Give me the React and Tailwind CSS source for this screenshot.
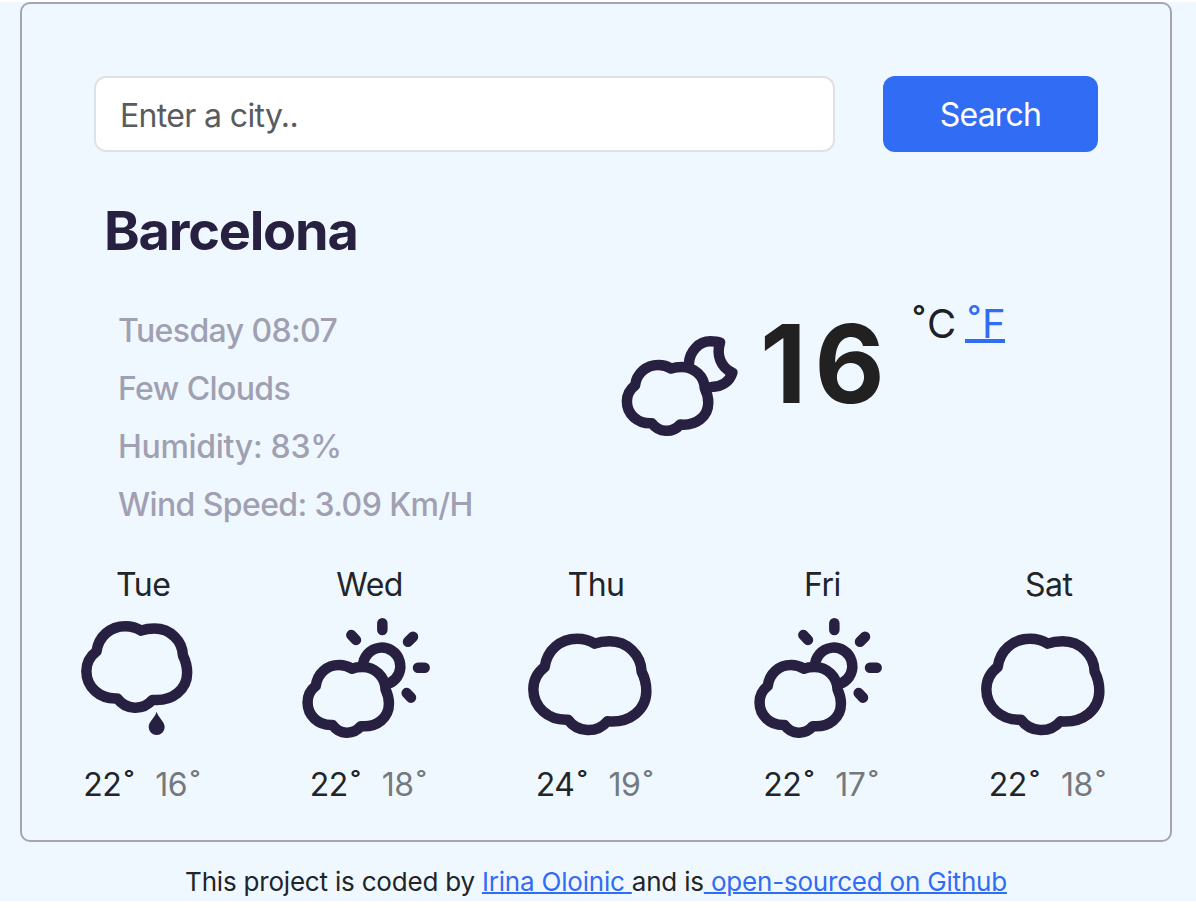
const CLOUD =
  "M135 321 C142 271 181 236 232 236 C252 236 270 241 285 251 C299 246 314 244 330 244 C383 244 424 285 426 335 C435 353 440 372 440 393 C440 448 392 490 323 484 A75 75 0 0 1 205 479 C145 482 101 440 101 388 C101 360 114 337 135 321 Z";

const stroke = {
  fill: "none",
  stroke: "#272041",
  strokeWidth: 10.5,
  strokeLinecap: "round",
  strokeLinejoin: "round",
  vectorEffect: "non-scaling-stroke",
};

function CloudIcon() {
  return (
    <svg viewBox="85 174 384 384" className="size-32">
      <path d={CLOUD} {...stroke} />
    </svg>
  );
}

function RainIcon() {
  return (
    <svg viewBox="17 174 384 384" className="size-32">
      <path d={CLOUD} transform="translate(-39 -12) scale(.892)" {...stroke} />
      <path d="M262 455 C266 472 286 484 286 501 A24 24 0 0 1 238 501 C238 484 258 472 262 455 Z" fill="#272041" />
    </svg>
  );
}

function SunCloudIcon() {
  return (
    <svg viewBox="696 174 384 384" className="size-32">
      <path d={CLOUD} transform="translate(640 140.4) scale(.72 .74)" {...stroke} />
      <path d="M879 318 A56 56 0 1 1 960 369" {...stroke} />
      <path d="M937 190 V210 M1014 245 L1029 230 M1044 323 H1064 M844 225 L858 240 M1010 399 L1023 413" {...stroke} />
    </svg>
  );
}

function MoonCloudIcon() {
  return (
    <svg viewBox="66 109 384 384" className="size-32">
      <path d={CLOUD} transform="translate(11 86) scale(.72)" {...stroke} />
      <path d="M270 250 C272 215 300 185 334 185 C347 185 356 186 363 189 C352 225 364 262 400 279 C392 305 370 322 337 322" {...stroke} />
    </svg>
  );
}

const days = [
  { day: "Tue", Icon: RainIcon, max: 22, min: 16 },
  { day: "Wed", Icon: SunCloudIcon, max: 22, min: 18 },
  { day: "Thu", Icon: CloudIcon, max: 24, min: 19 },
  { day: "Fri", Icon: SunCloudIcon, max: 22, min: 17 },
  { day: "Sat", Icon: CloudIcon, max: 22, min: 18 },
];

export default function App() {
  return (
    <div className="h-[908px] w-[1196px] overflow-hidden bg-white pt-0.5 font-['Inter',sans-serif] text-[#212529]">
      <div className="h-[899px] bg-[#f0f8ff] px-5 pr-6">
        <main className="h-[840px] rounded-[10px] border-2 border-[#a5a3b5] pt-[72px]">
          <form className="ml-[72px] flex gap-12">
            <input
              className="h-19 w-[741px] rounded-xl border-2 border-[#dee2e6] bg-white px-6 pt-0.5 text-[32px] tracking-[-0.65px] placeholder:text-[#595c5f]"
              placeholder="Enter a city.."
            />
            <button type="button" className="h-19 w-[215px] rounded-xl bg-[#316cf4] pt-0.5 text-[32px] tracking-[-0.8px] text-white">
              Search
            </button>
          </form>

          <h1 className="mt-[45px] ml-[82px] text-[54px] leading-[67px] font-bold tracking-[-1.2px] text-[#272041]">Barcelona</h1>

          <section className="mt-[38px] flex h-[232px]">
            <ul className="ml-[96px] w-[503px] text-[32px] leading-[58px] font-medium tracking-[-0.6px] text-[#a0a0b2]">
              <li>Tuesday 08:07</li>
              <li>Few Clouds</li>
              <li className="tracking-[-0.3px]">Humidity: 83%</li>
              <li>Wind Speed: 3.09 Km/H</li>
            </ul>
            <div className="mt-[14px]">
              <MoonCloudIcon />
            </div>
            <div className="ml-[11px] w-[153px] text-[108px] leading-[124px] font-bold tracking-[8px] text-[#212121]">16</div>
            <div className="flex items-start text-[40px] leading-[43px] tracking-[-1px] text-[#212121]">
              <span className="mr-[3px]">˚</span>
              <span>C</span>
              <a className="ml-[10px] flex h-[41px] border-b-4 border-[#316cf4] pl-[3px] text-[#316cf4]">
                <span className="mr-[3px]">˚</span>
                <span>F</span>
              </a>
            </div>
          </section>

          <section className="mx-2 mt-[27px] grid grid-cols-5">
            {days.map(({ day, Icon, max, min }) => (
              <article key={day} className="flex flex-col items-center">
                <div className="text-[32px] leading-[48px] tracking-[-0.5px]">{day}</div>
                <div className="mt-[9px] mr-2">
                  <Icon />
                </div>
                <div className="mt-[15px] mr-1 flex gap-[22px] text-[32px] leading-[48px] tracking-[-0.5px]">
                  <span>
                    {max}
                    <span className="ml-[3px]">˚</span>
                  </span>
                  <span className="text-[#75797d]">
                    {min}
                    <span className="ml-[3px]">˚</span>
                  </span>
                </div>
              </article>
            ))}
          </section>
        </main>
        <footer className="mt-[20px] text-center text-[26px] leading-[39px] tracking-[-0.2px] whitespace-pre">
          This project is coded by <a className="text-[#316cf4] underline decoration-2">Irina Oloinic </a>and is<a className="text-[#316cf4] underline decoration-2"> open-sourced on Github</a>
        </footer>
      </div>
    </div>
  );
}
